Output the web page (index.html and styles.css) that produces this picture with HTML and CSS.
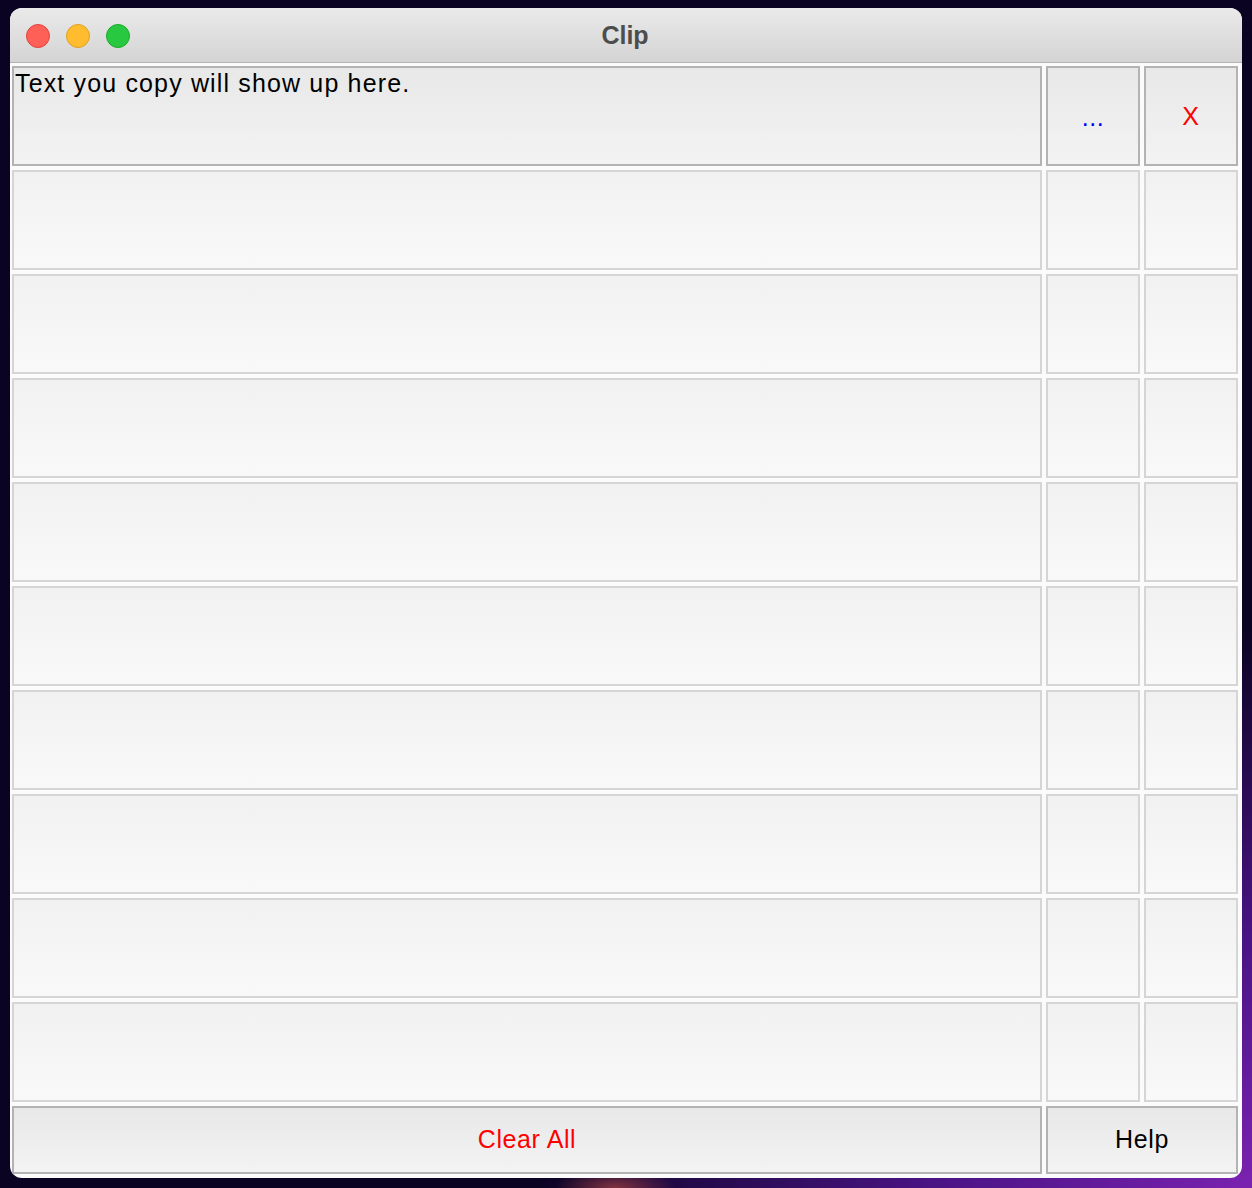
FILE: index.html
```html
<!DOCTYPE html>
<html>
<head>
<meta charset="utf-8">
<title>Clip</title>
<link rel="stylesheet" href="styles.css">
</head>
<body>
<div class="desktop">
  <div class="window">
    <div class="titlebar">
      <div class="lights">
        <span class="light red"></span>
        <span class="light yellow"></span>
        <span class="light green"></span>
      </div>
      <div class="title">Clip</div>
    </div>
    <div class="content">
      <div class="row first">
        <div class="cell text">Text you copy will show up here.</div>
        <div class="cell btn more">...</div>
        <div class="cell btn del">X</div>
      </div>
      <div class="row"><div class="cell text"></div><div class="cell btn"></div><div class="cell btn"></div></div>
      <div class="row"><div class="cell text"></div><div class="cell btn"></div><div class="cell btn"></div></div>
      <div class="row"><div class="cell text"></div><div class="cell btn"></div><div class="cell btn"></div></div>
      <div class="row"><div class="cell text"></div><div class="cell btn"></div><div class="cell btn"></div></div>
      <div class="row"><div class="cell text"></div><div class="cell btn"></div><div class="cell btn"></div></div>
      <div class="row"><div class="cell text"></div><div class="cell btn"></div><div class="cell btn"></div></div>
      <div class="row"><div class="cell text"></div><div class="cell btn"></div><div class="cell btn"></div></div>
      <div class="row"><div class="cell text"></div><div class="cell btn"></div><div class="cell btn"></div></div>
      <div class="row"><div class="cell text"></div><div class="cell btn"></div><div class="cell btn"></div></div>
      <div class="footer">
        <div class="cell btn clear">Clear All</div>
        <div class="cell btn help">Help</div>
      </div>
    </div>
  </div>
</div>
</body>
</html>
```

FILE: styles.css
```css
html, body {
  margin: 0;
  padding: 0;
}

body {
  width: 1252px;
  height: 1188px;
  overflow: hidden;
  font-family: "Liberation Sans", Arial, sans-serif;
}

.desktop {
  width: 1252px;
  height: 1188px;
  box-sizing: border-box;
  padding: 8px 10px 10px 10px;
  background:
    radial-gradient(ellipse 60px 20px at 615px 1188px, rgba(200, 80, 70, 0.6), rgba(200, 80, 70, 0) 100%),
    radial-gradient(ellipse 900px 700px at 1252px 1188px, #7a22b0 0%, #4a1485 35%, rgba(20, 6, 60, 0) 80%),
    #0a0322;
}

.window {
  width: 1232px;
  height: 1170px;
  border-radius: 12px;
  overflow: hidden;
  background: #fbfbfb;
  display: flex;
  flex-direction: column;
}

.titlebar {
  height: 54px;
  flex: none;
  background: linear-gradient(#eaeaea, #d4d4d4);
  border-bottom: 1px solid #b3b3b3;
  display: flex;
  align-items: center;
  justify-content: center;
  position: relative;
}

.lights {
  position: absolute;
  left: 16px;
  top: 16px;
  display: flex;
  gap: 16px;
}

.light {
  width: 24px;
  height: 24px;
  border-radius: 50%;
  box-sizing: border-box;
}

.red { background: #fe5f57; border: 1px solid #e0443e; }
.yellow { background: #febc2e; border: 1px solid #dea123; }
.green { background: #28c840; border: 1px solid #1aab29; }

.title {
  font-weight: bold;
  font-size: 25px;
  color: #4d4d4d;
  margin-right: 2px;
  margin-top: 0;
}

.content {
  flex: 1;
  padding: 3px 4px 4px 2px;
  display: flex;
  flex-direction: column;
  gap: 4px;
}

.row, .footer {
  display: grid;
  grid-template-columns: 1030px 94px 94px;
  gap: 4px;
  height: 100px;
}

.footer {
  grid-template-columns: 1030px 192px;
  height: 68px;
}

.cell {
  box-sizing: border-box;
  border: 2px solid #d5d5d5;
  background: linear-gradient(#f1f1f1, #f9f9f9);
  font-size: 25px;
  letter-spacing: 0.6px;
  color: #000;
}

.first .cell, .footer .cell {
  border-color: #b3b3b3;
  background: linear-gradient(#e8e8e8, #f3f3f3);
}

.text {
  padding: 1px 0 0 1px;
  letter-spacing: 1.15px;
  line-height: 28px;
}

.btn {
  display: flex;
  align-items: center;
  justify-content: center;
}

.more { color: #0000ff; padding-top: 2px; }
.del { color: #ff0000; }
.clear { color: #ff0000; padding-bottom: 2px; }
.help { color: #000; padding-bottom: 2px; }
```
